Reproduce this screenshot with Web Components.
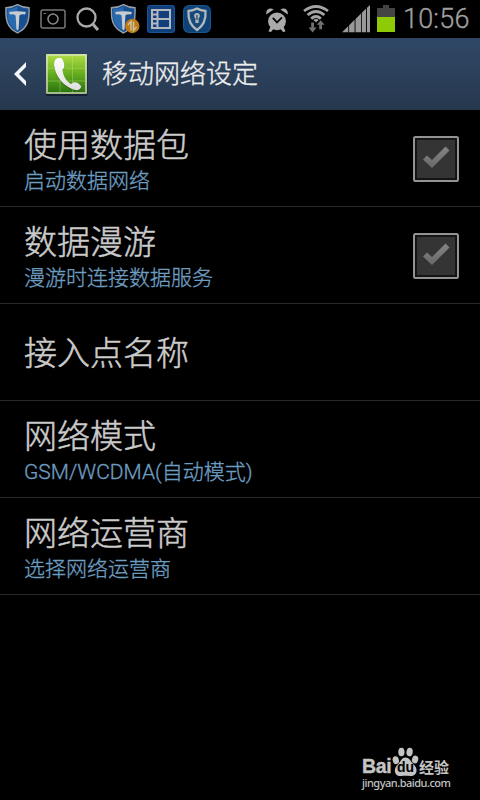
<!DOCTYPE html>
<html lang="zh-CN">
<head>
<meta charset="utf-8">
<title>移动网络设定</title>
<style>
  html, body {
    margin: 0;
    height: 100%;
    background: #000;
  }
  body {
    overflow: hidden;
    font-family: Roboto, "Noto Sans CJK SC", sans-serif;
  }
</style>
</head>
<body>
<network-settings></network-settings>

<script>
// Status bar icons, all drawn in their own 1:1 pixel box
const ICONS = {
  shield: [25, 30, `
    <path d="M12.5 .7C9 2.7 5 3.7 1 3.8C.5 14 .8 23 12.5 29C24.2 23 24.5 14 24 3.8C20 3.7 16 2.7 12.5 .7Z" fill="#174f91" stroke="#9aa1a8" stroke-width="1.4"/>
    <path d="M12.5 2.4C9 4.3 6 5 2.6 5.3C2.2 15 3 22 12.5 27Z" fill="#2869af"/>
    <path d="M4 8Q12.5 6.5 21 8L20 10.5Q16 9.8 14.4 11.5L13.6 25L12.5 26.5L11.4 25L10.6 11.5Q9 9.8 5 10.5Z" fill="#c8ccd0"/>`],
  camera: [26, 20, `
    <rect x="1" y="1" width="24" height="18" rx="2" fill="none" stroke="#77797a" stroke-width="1.5"/>
    <circle cx="13" cy="10" r="5" fill="none" stroke="#85898a" stroke-width="1.6"/>
    <path d="M3.5 4.5h2.5" stroke="#77797a" stroke-width="1"/>`],
  search: [24, 25, `
    <circle cx="10.5" cy="10.5" r="9" fill="none" stroke="#aaa" stroke-width="2.3"/>
    <path d="M16.8 17L22 23" stroke="#aaa" stroke-width="3"/>`],
  shieldData: [30, 30, `
    <path d="M13.5 .7C10 2.7 6 3.7 1.5 3.8C1 14 1.5 23 13.5 29C25.2 23 25.5 14 25 3.8C21 3.7 17 2.7 13.5 .7Z" fill="#174f91" stroke="#9aa1a8" stroke-width="1.4"/>
    <path d="M13.5 2.4C10 4.3 7 5 3.1 5.3C2.7 15 4 22 13.5 27Z" fill="#2869af"/>
    <path d="M5 8Q13.5 6.5 22 8L21 10.5Q17 9.8 15.4 11.5L14.6 25L13.5 26.5L12.4 25L11.6 11.5Q10 9.8 6 10.5Z" fill="#c8ccd0"/>
    <circle cx="22.3" cy="22" r="7.2" fill="#bd7c12"/>
    <path d="M21 26.5V17.5L18 21M23.5 17.5V26.5L26.5 23" fill="none" stroke="#c9c0a5" stroke-width="1.5"/>`],
  film: [28, 28, `
    <rect width="28" height="28" rx="3" fill="#103f7b"/>
    <rect x=".5" y=".5" width="27" height="27" rx="3" fill="none" stroke="#1b5492"/>
    <path d="M5 5H23V23H5ZM10.5 5V23M10.5 14H23M5 9.5H10M5 14H10M5 18.5H10" fill="none" stroke="#b4b8be" stroke-width="2"/>`],
  lock: [28, 28, `
    <rect width="28" height="28" rx="6" fill="#0f4377"/>
    <rect x=".5" y=".5" width="27" height="27" rx="6" fill="none" stroke="#1b568b"/>
    <path d="M14 3.5C11 5.2 8.6 5.7 5.5 6C4.9 14 7.2 20.5 14 25C20.8 20.5 23.1 14 22.5 6C19.4 5.7 17 5.2 14 3.5Z" fill="#174a7c" stroke="#b2b8bc" stroke-width="2.3"/>
    <circle cx="14" cy="10.8" r="2.8" fill="#b2b8bc"/>
    <path d="M12.4 12H15.6V18H12.4Z" fill="#b2b8bc"/>
    <path d="M14 10V15" stroke="#173e64" stroke-width="1.2"/>`],
  alarm: [22, 25, `
    <g fill="#aaa">
      <circle cx="11" cy="13.3" r="8.9"/>
      <path d="M.3 6.4C-.6 1.8 3.8 -1.3 7.6 1.6Z"/>
      <path d="M21.7 6.4C22.6 1.8 18.2 -1.3 14.4 1.6Z"/>
      <path d="M4.3 19L2.5 23.4L5 24L7.8 20.5ZM17.7 19L19.5 23.4L17 24L14.2 20.5Z"/>
    </g>
    <path d="M6.8 9.8L11 14.4L16 9.4" fill="none" stroke="#080808" stroke-width="1.8"/>`],
  wifi: [26, 28, `
    <g fill="none" stroke="#a4a4a4" stroke-width="2.8">
      <path d="M1 6Q13 -3 25 6"/>
      <path d="M4.6 10Q13 3 21.4 10"/>
      <path d="M8.2 13.6Q13 9.5 17.8 13.6"/>
    </g>
    <path d="M10.3 15Q13 12.8 15.7 15L13 17.3Z" fill="#a4a4a4"/>
    <path d="M8.2 17.5H11V22.5H13.7L9.6 27.5L5.5 22.5H8.2Z" fill="#707070"/>
    <path d="M16.2 24.3H19V19.8H21.7L17.6 15.3L13.7 19.8H16.2Z" fill="#707070"/>`],
  signal: [29, 28, `
    <path d="M0 27.2L6.3 21V27.2ZM7.1 20.2L12.6 14.8V27.2H7.1ZM13.5 13.9L19 8.5V27.2H13.5ZM19.8 7.8L24.1 3.6V27.2H19.8ZM25 2.8L28 0V27.2H25Z" fill="#999"/>`],
  battery: [18, 27, `
    <path d="M0 3H6V0H12V3H18V12H0Z" fill="#444"/>
    <rect y="12" width="18" height="15" fill="#8fcb05"/>`]
};

class StatusIcon extends HTMLElement {
  constructor() {
    super();
    this.attachShadow({ mode: "open" });
  }

  connectedCallback() {
    const [w, h, body] = ICONS[this.getAttribute("name")];
    this.shadowRoot.innerHTML = `
      <style>
        :host { display: block; flex: none; }
        svg { display: block; }
      </style>
      <svg width="${w}" height="${h}" viewBox="0 0 ${w} ${h}">${body}</svg>
    `;
  }
}
customElements.define("status-icon", StatusIcon);

class StatusBar extends HTMLElement {
  constructor() {
    super();
    this.attachShadow({ mode: "open" });
    this.shadowRoot.innerHTML = `
      <style>
        :host {
          display: flex;
          align-items: center;
          justify-content: space-between;
          box-sizing: border-box;
          height: 38px;
          padding: 0 9px 0 5px;
          background: #000;
        }
        .group { display: flex; align-items: center; }
        .notices { gap: 10px; }
        .notices status-icon[name="shieldData"] { margin-right: -3px; }
        .notices status-icon[name="lock"] { margin-left: -2px; }
        .system status-icon[name="alarm"] { margin: 2px 15px 0 0; }
        .system status-icon[name="wifi"] { margin-right: 13px; }
        .system status-icon[name="signal"] { margin-right: 6px; }
        .system status-icon[name="battery"] { margin-bottom: 1px; }
        .time {
          margin-left: 8px;
          width: 68px;
          font-size: 27px;
          line-height: 38px;
          font-weight: 300;
          letter-spacing: .2px;
          -webkit-text-stroke: .3px currentColor;
          color: #a0a0a0;
          white-space: nowrap;
        }
      </style>
      <div class="group notices">
        <status-icon name="shield"></status-icon>
        <status-icon name="camera"></status-icon>
        <status-icon name="search"></status-icon>
        <status-icon name="shieldData"></status-icon>
        <status-icon name="film"></status-icon>
        <status-icon name="lock"></status-icon>
      </div>
      <div class="group system">
        <status-icon name="alarm"></status-icon>
        <status-icon name="wifi"></status-icon>
        <status-icon name="signal"></status-icon>
        <status-icon name="battery"></status-icon>
        <span class="time">10:56</span>
      </div>
    `;
  }
}
customElements.define("status-bar", StatusBar);

class ActionBar extends HTMLElement {
  constructor() {
    super();
    this.attachShadow({ mode: "open" });
    this.shadowRoot.innerHTML = `
      <style>
        :host {
          display: flex;
          align-items: center;
          box-sizing: border-box;
          height: 72px;
          padding-left: 14px;
          background: linear-gradient(#304867, #26384e);
          border-top: 1px solid #30435b;
          border-bottom: 1px solid #22364c;
          color: #eee;
        }
        svg { display: block; flex: none; }
        .phone { margin: 2px 14px 0 18px; }
        h1 {
          margin: 0;
          font-size: 26px;
          line-height: 40px;
          font-weight: 300;
          -webkit-text-stroke: .35px currentColor;
        }
      </style>
      <svg width="12" height="24" viewBox="0 0 12 24">
        <path d="M12 0V5L5 12L12 19V24L0 12Z" fill="#f2f5f8"/>
      </svg>
      <svg class="phone" width="44" height="44" viewBox="0 0 44 44">
        <defs>
          <linearGradient id="green" x1="0" y1="0" x2="0" y2="1">
            <stop offset="0" stop-color="#acd943"/>
            <stop offset=".5" stop-color="#65ad1f"/>
            <stop offset="1" stop-color="#2b7510"/>
          </linearGradient>
          <linearGradient id="edge" x1="0" y1="0" x2="0" y2="1">
            <stop offset="0" stop-color="#d0e4a1"/>
            <stop offset="1" stop-color="#a4b889"/>
          </linearGradient>
          <linearGradient id="handset" x1="0" y1="0" x2="0" y2="1">
            <stop offset="0" stop-color="#fff"/>
            <stop offset="1" stop-color="#dedede"/>
          </linearGradient>
        </defs>
        <rect x="2" y="3" width="41.5" height="40" rx="1.5" fill="#132033"/>
        <rect x="2" y="1" width="41" height="40" rx="1" fill="url(#edge)"/>
        <rect x="4" y="3" width="37" height="36" fill="url(#green)"/>
        <path d="M16 3V39M28.5 3V39M4 15.3H41M4 28H41" stroke="#c6eb7a" stroke-opacity=".35"/>
        <path d="M14 6C10 7 9.8 11 10.4 15C12 25 19 33 28 37C32 39 36.5 38.5 37.5 34.5C36 31 32.5 29.5 29 30L27 32.5C22 29.5 18.5 24.5 17.7 18L20.5 15.5C21 11 19.5 7.5 17.5 6Z" fill="#234a13" fill-opacity=".55"/>
        <path d="M14 5C10 6 9.8 10 10.4 14C12 24 19 32 28 36C32 38 36.5 37.5 37.2 33.5C35.5 30.5 32.5 29 29.3 29.4L27 31C22 28 19.5 23.5 18.4 17L20.4 14.5C20.6 10.5 19.3 7 17.3 5Z" fill="url(#handset)"/>
      </svg>
      <h1><slot></slot></h1>
    `;
  }
}
customElements.define("action-bar", ActionBar);

class CheckBox extends HTMLElement {
  constructor() {
    super();
    this.attachShadow({ mode: "open" });
    this.shadowRoot.innerHTML = `
      <style>
        :host { display: block; flex: none; }
        svg { display: block; }
      </style>
      <svg width="46" height="46" viewBox="0 0 46 46">
        <defs>
          <linearGradient id="tick" x1="0" y1="0" x2="0" y2="1">
            <stop offset="0" stop-color="#858585"/>
            <stop offset="1" stop-color="#686868"/>
          </linearGradient>
        </defs>
        <rect x="1" y="1" width="44" height="44" rx="1.5" fill="#141414" stroke="#939393" stroke-width="2"/>
        <rect x="4" y="4" width="38" height="38" fill="#343434"/>
        <path d="M10 23.5L14 19.5L19 24L32.5 10.5L36.5 14.5L19 32Z" fill="url(#tick)"/>
      </svg>
    `;
  }
}
customElements.define("check-box", CheckBox);

class SettingRow extends HTMLElement {
  constructor() {
    super();
    this.attachShadow({ mode: "open" });
  }

  connectedCallback() {
    const summary = this.getAttribute("summary");
    const check = this.hasAttribute("checkable") ? "<check-box></check-box>" : "";

    this.shadowRoot.innerHTML = `
      <style>
        :host {
          display: flex;
          align-items: center;
          justify-content: space-between;
          box-sizing: border-box;
          height: 97px;
          padding: 0 21px 0 24px;
          border-bottom: 1px solid #292929;
        }
        .text {
          padding-top: 4px;
          font-weight: 300;
          white-space: nowrap;
        }
        .two { padding-top: 7px; }
        .title {
          font-size: 33px;
          line-height: 40px;
          color: #cbcbcb;
          -webkit-text-stroke: .5px currentColor;
        }
        .summary {
          font-size: 21px;
          line-height: 31px;
          color: #6c9dc0;
          -webkit-text-stroke: .35px currentColor;
        }
        check-box { margin-top: 2px; }
      </style>
      <div class="text ${summary ? "two" : ""}">
        <div class="title"><slot></slot></div>
        ${summary ? `<div class="summary">${summary}</div>` : ""}
      </div>
      ${check}
    `;
  }
}
customElements.define("setting-row", SettingRow);

class SiteMark extends HTMLElement {
  constructor() {
    super();
    this.attachShadow({ mode: "open" });
    this.shadowRoot.innerHTML = `
      <style>
        :host {
          display: block;
          width: 92px;
          color: #c4c4c4;
        }
        .brand {
          display: flex;
          align-items: flex-end;
          height: 31px;
        }
        .bai {
          width: 30px;
          margin-bottom: 1px;
          font: 700 19.5px/20px "Liberation Sans", sans-serif;
          letter-spacing: -.3px;
          -webkit-text-stroke: .4px currentColor;
        }
        .paw {
          display: grid;
          flex: none;
          width: 27px;
          height: 31px;
        }
        .paw > * { grid-area: 1 / 1; }
        .du {
          place-self: end center;
          margin-bottom: 3px;
          font: 700 14px/14px "Liberation Sans", sans-serif;
          color: #000;
        }
        .name { font: 700 15px/20px "Noto Sans CJK SC", sans-serif; }
        .url {
          font: 500 11px/12px "Noto Sans", sans-serif;
          letter-spacing: -.5px;
          white-space: nowrap;
        }
      </style>
      <div class="brand">
        <span class="bai">Bai</span>
        <span class="paw">
          <svg width="27" height="31" viewBox="0 0 27 31" fill="#c4c4c4">
            <ellipse cx="3.8" cy="14.2" rx="3.1" ry="4" transform="rotate(-15 3.8 14.2)"/>
            <ellipse cx="9.4" cy="6" rx="3.1" ry="4.3"/>
            <ellipse cx="17.6" cy="6" rx="3.1" ry="4.3" transform="rotate(8 17.6 6)"/>
            <ellipse cx="23.1" cy="13.5" rx="3.1" ry="4" transform="rotate(15 23.1 13.5)"/>
            <path d="M13.5 11.5C17.5 11.5 18.5 15.5 22 18.8C27 24 24 30.5 18.5 30C15 29.5 12.5 29.5 9 30C3 30.5 .5 24 5.5 18.8C9 15.5 9.5 11.5 13.5 11.5Z"/>
          </svg>
          <span class="du">du</span>
        </span>
        <span class="name">经验</span>
      </div>
      <div class="url">jingyan.baidu.com</div>
    `;
  }
}
customElements.define("site-mark", SiteMark);

class NetworkSettings extends HTMLElement {
  constructor() {
    super();
    this.attachShadow({ mode: "open" });
    this.shadowRoot.innerHTML = `
      <style>
        :host {
          display: flex;
          flex-direction: column;
          width: 480px;
          height: 800px;
          background: #000;
        }
        main { flex: 1; }
        site-mark { align-self: flex-end; margin: 0 26px 11px 0; }
      </style>
      <status-bar></status-bar>
      <action-bar>移动网络设定</action-bar>
      <main>
        <setting-row summary="启动数据网络" checkable>使用数据包</setting-row>
        <setting-row summary="漫游时连接数据服务" checkable>数据漫游</setting-row>
        <setting-row>接入点名称</setting-row>
        <setting-row summary="GSM/WCDMA(自动模式)">网络模式</setting-row>
        <setting-row summary="选择网络运营商">网络运营商</setting-row>
      </main>
      <site-mark></site-mark>
    `;
  }
}
customElements.define("network-settings", NetworkSettings);
</script>
</body>
</html>
